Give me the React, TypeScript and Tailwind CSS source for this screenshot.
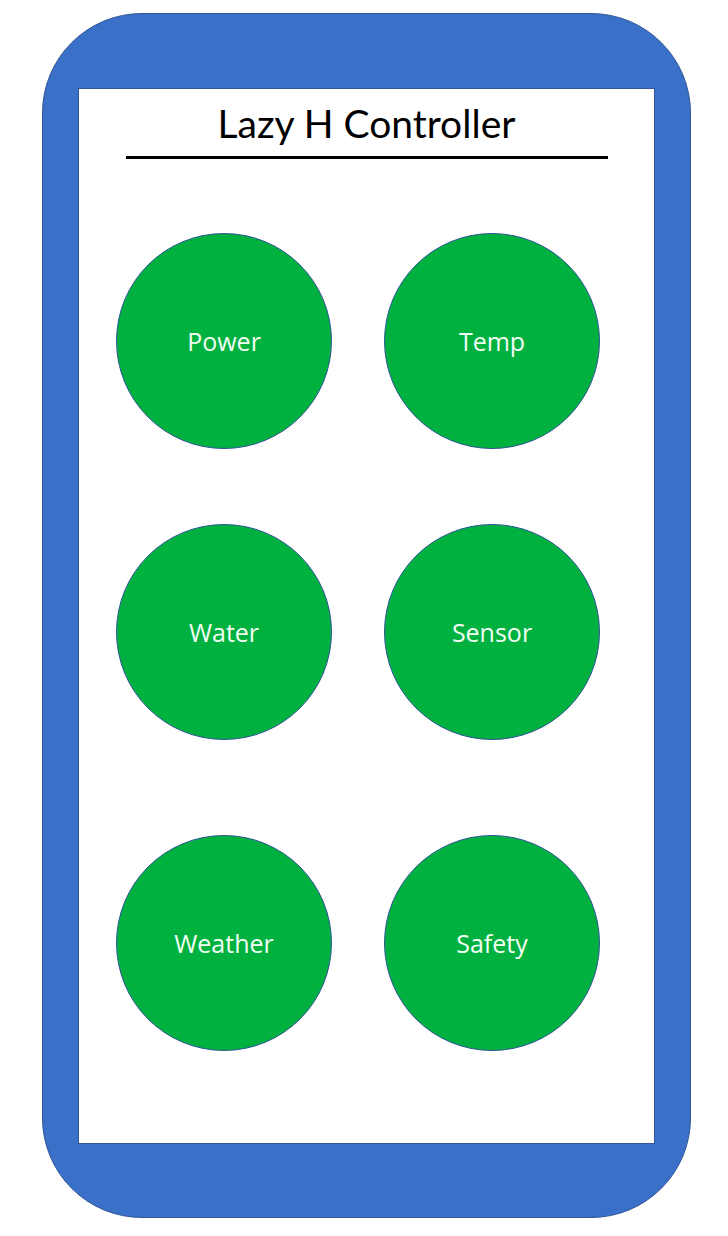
import React from "react";

const rows: { labels: [string, string]; mt: string }[] = [
  { labels: ["Power", "Temp"], mt: "mt-[144px]" },
  { labels: ["Water", "Sensor"], mt: "mt-[75px]" },
  { labels: ["Weather", "Safety"], mt: "mt-[95px]" },
];

function Circle({ label }: { label: string }) {
  return (
    <div className="flex h-[216px] w-[216px] items-center justify-center rounded-full border-[1.5px] border-[#2f5597] bg-[#00b140]">
      <span className="text-[25px] font-medium leading-none text-[#f2fff4]" style={{ fontFamily: '"Open Sans", sans-serif' }}>
        {label}
      </span>
    </div>
  );
}

export default function App() {
  return (
    <div className="h-[1236px] w-[728px] bg-white pl-[42px] pt-[13px]" style={{ fontFamily: '"Open Sans", sans-serif' }}>
      <div className="h-[1205px] w-[649px] rounded-[100px] border-[1.5px] border-[#2f5597] bg-[#3a70c8] px-[35px] pt-[74px]">
        <div className="relative h-[1056px] w-[577px] border-[1.5px] border-[#2f5597] bg-white">
          <div className="flex flex-col items-center pt-[10px]">
            <h1 className="text-[39px] leading-[48px] text-black" style={{ fontFamily: "Lato, sans-serif" }}>
              Lazy H Controller
            </h1>
            <div className="mt-[9px] h-[3px] w-[482px] bg-black" />
          </div>
          <div className="absolute left-0 top-0 w-full pl-[37px]">
            {rows.map((r, i) => (
              <div key={i} className={`flex gap-[52px] ${r.mt}`}>
                <Circle label={r.labels[0]} />
                <Circle label={r.labels[1]} />
              </div>
            ))}
          </div>
        </div>
      </div>
    </div>
  );
}
